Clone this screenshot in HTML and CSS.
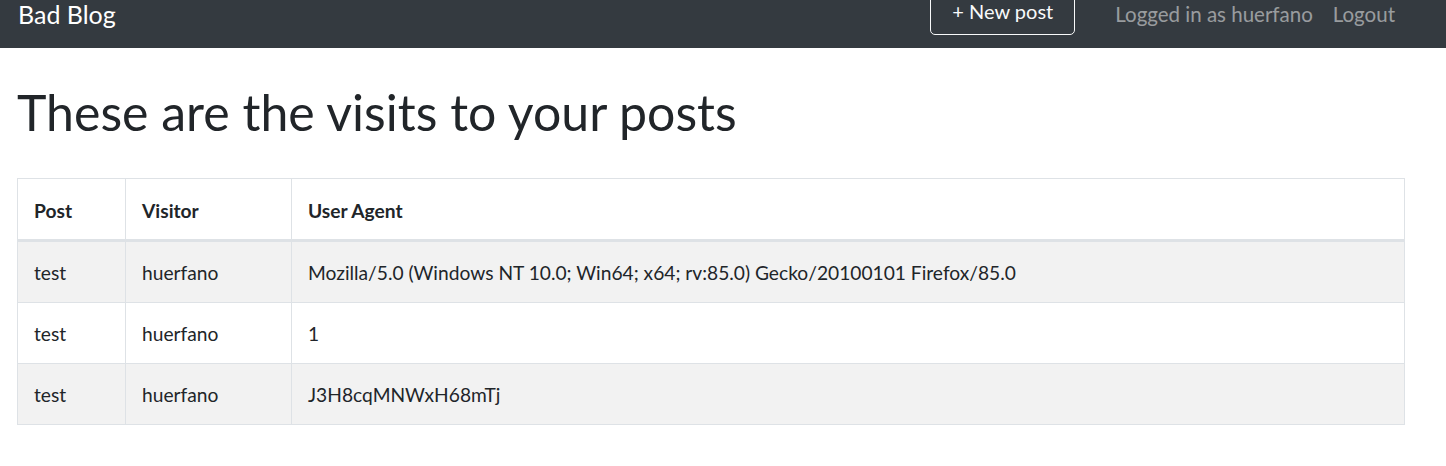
FILE: index.html
```html
<!DOCTYPE html>
<html lang="en">
<head>
<meta charset="utf-8">
<title>Bad Blog</title>
<link rel="stylesheet" href="styles.css">
</head>
<body>
<nav class="navbar">
  <div class="navbar-inner">
    <a class="brand" href="#">Bad Blog</a>
    <div class="nav-right">
      <a class="btn-new" href="#">+ New post</a>
      <span class="nav-link">Logged in as huerfano</span>
      <a class="nav-link" href="#">Logout</a>
    </div>
  </div>
</nav>
<main class="container">
  <h1 class="title">These are the visits to your posts</h1>
  <table class="visits">
    <thead>
      <tr><th class="c-post">Post</th><th class="c-visitor">Visitor</th><th>User Agent</th></tr>
    </thead>
    <tbody>
      <tr><td>test</td><td>huerfano</td><td>Mozilla/5.0 (Windows NT 10.0; Win64; x64; rv:85.0) Gecko/20100101 Firefox/85.0</td></tr>
      <tr><td>test</td><td>huerfano</td><td>1</td></tr>
      <tr><td>test</td><td>huerfano</td><td>J3H8cqMNWxH68mTj</td></tr>
    </tbody>
  </table>
</main>
</body>
</html>
```
FILE: styles.css
```css
* { box-sizing: border-box; }
html, body { margin: 0; padding: 0; }
body {
  font-family: Lato, "Liberation Sans", sans-serif;
  font-size: 20px;
  line-height: 30px;
  color: #212529;
  background: #fff;
}
a { text-decoration: none; }

.navbar {
  background: #343a40;
  height: 48px;
  overflow: hidden;
  padding: 0 41px 0 18px;
}
.navbar-inner {
  height: 68px;
  margin-top: -20px;
  display: flex;
  align-items: center;
  justify-content: space-between;
}
.brand {
  color: #fff;
  font-size: 25px;
  line-height: 37px;
}
.nav-right {
  display: flex;
  align-items: center;
}
.btn-new {
  display: block;
  width: 145px;
  height: 47px;
  margin-top: -5px;
  margin-right: 30px;
  border: 1px solid #f8f9fa;
  border-radius: 5px;
  color: #f8f9fa;
  text-align: center;
  line-height: 45px;
}
.nav-link {
  color: rgba(255,255,255,.5);
  padding: 0 10px;
  font-size: 20.5px;
}

.container {
  padding: 0 41px 0 17px;
}
.title {
  font-size: 50px;
  font-weight: 400;
  line-height: 60px;
  height: 60px;
  margin: 34px 0 0 0;
}
.visits {
  margin-top: 36px;
  width: 100%;
  border-collapse: collapse;
  border: 1px solid #dee2e6;
  font-size: 19.2px;
}
.visits th, .visits td {
  border: 1px solid #dee2e6;
  padding: 16px 16px 14px;
  text-align: left;
  vertical-align: top;
  line-height: 30px;
}
.visits th { font-weight: 700; border-bottom-width: 3px; height: 61px; padding-top: 17px; padding-bottom: 13px; }
.visits td { height: 61px; }
.c-post { width: 108px; }
.c-visitor { width: 166px; }
.visits tbody tr:nth-child(odd) { background: #f2f2f2; }
```
